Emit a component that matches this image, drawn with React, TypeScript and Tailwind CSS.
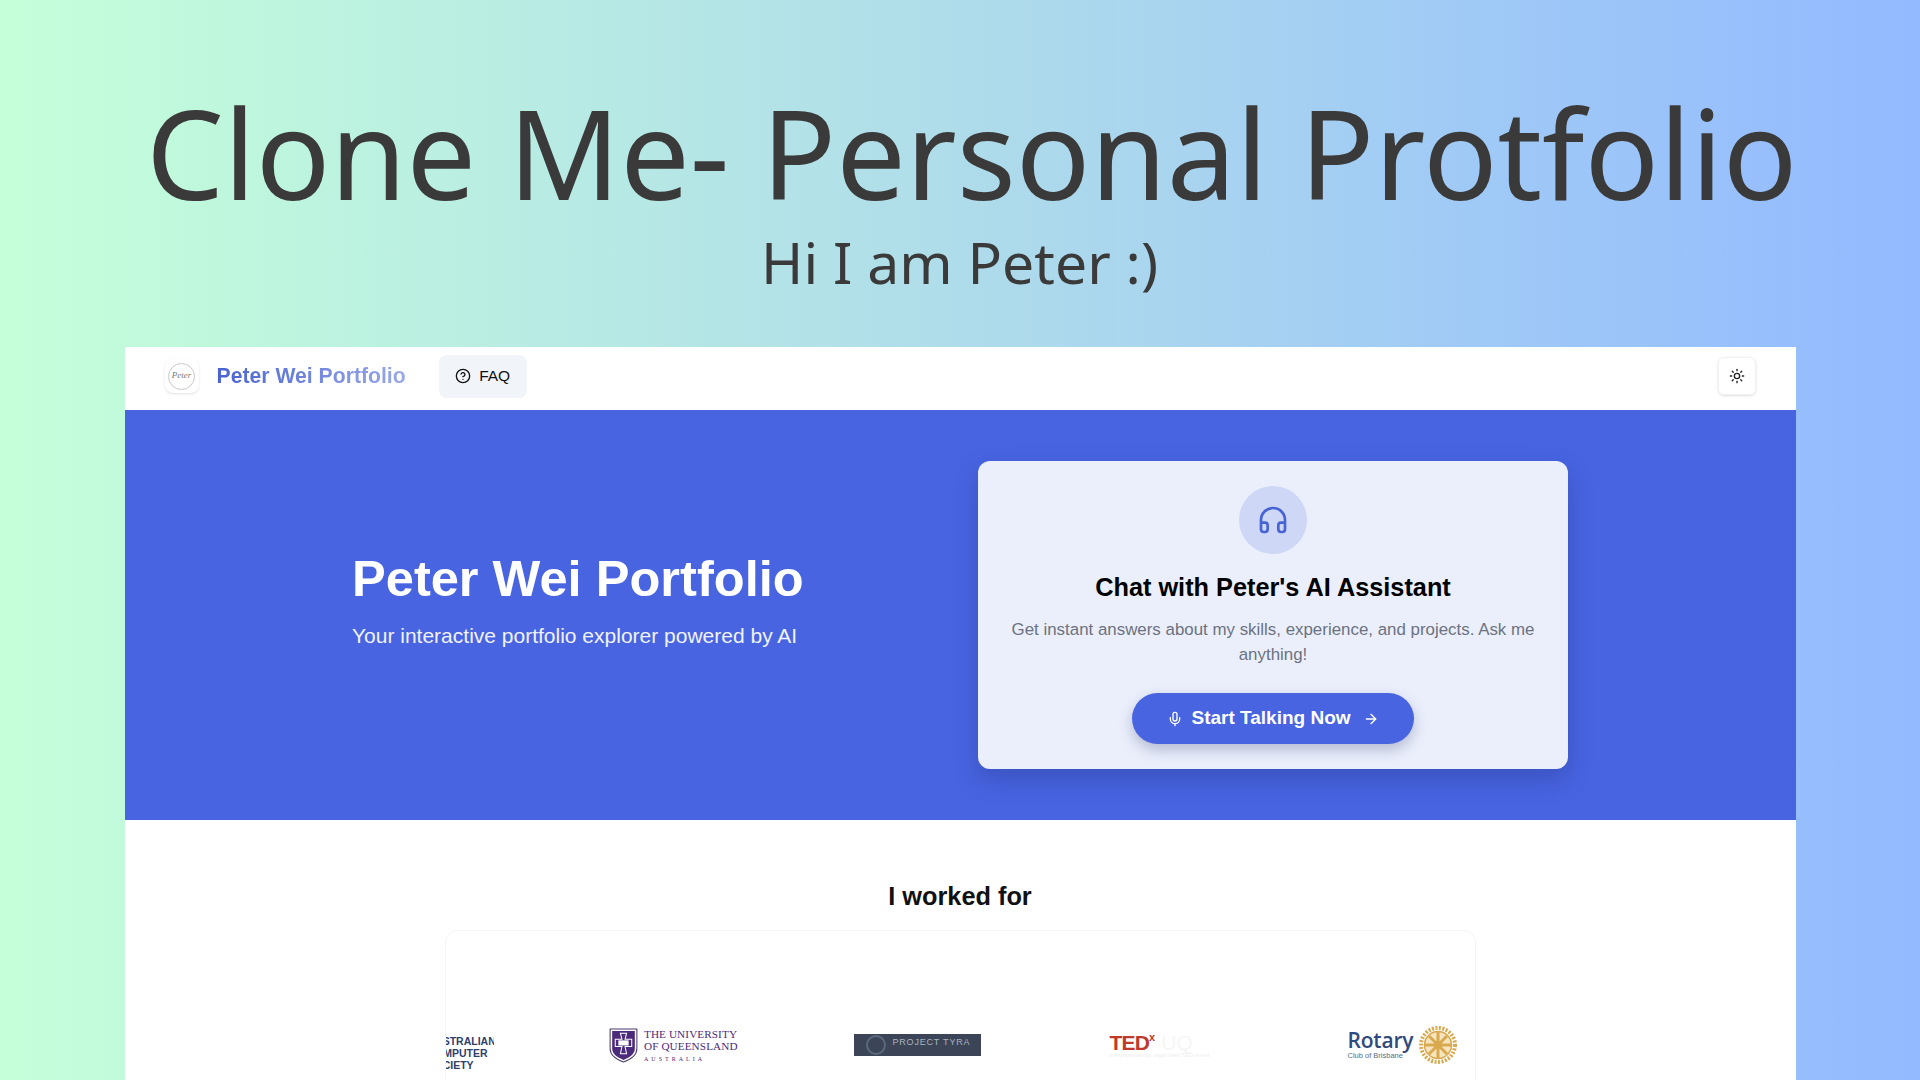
import React from 'react';
import { CircleHelp, Sun, Headphones, Mic, ArrowRight } from 'lucide-react';

const sans = { fontFamily: '"Liberation Sans", Arial, sans-serif' };

const UqLogo = () => (
  <div className="flex items-start gap-[6px] w-[126.5px] shrink-0">
    <svg width="29" height="35" viewBox="0 0 28 34" className="shrink-0">
      <path d="M1 1H27V20C27 27 20 31 14 33C8 31 1 27 1 20Z" fill="#fff" stroke="#4a3a70" strokeWidth="1" />
      <path d="M3 3H25V20C25 26 19 29 14 31C9 29 3 26 3 20Z" fill="#4b2a7b" />
      <path d="M11 5H17L15.5 11H22V18H15.5L17 25H11L12.5 18H6V11H12.5Z" fill="#4b2a7b" stroke="#fff" strokeWidth="1" />
      <rect x="9" y="12" width="10" height="5" fill="#fff" />
    </svg>
    <div className="text-[#4b2a7b] leading-none whitespace-nowrap font-['Liberation_Serif',serif]">
      <div className="text-[11.2px] tracking-[0.1px] mt-[1px]">THE UNIVERSITY</div>
      <div className="text-[11.2px] tracking-[0.1px] mt-[1px]">OF QUEENSLAND</div>
      <div className="text-[6px] tracking-[3px] mt-[4px]">AUSTRALIA</div>
    </div>
  </div>
);

const TyraLogo = () => (
  <div className="flex items-center w-[127px] h-[22px] bg-[#3b4557] shrink-0 pl-3 gap-[7px]">
    <span className="w-5 h-5 rounded-full border-2 border-[#5d6a7d]" />
    <span className="text-[9px] tracking-[0.8px] text-[#aab3bf] -mt-[4px]" style={sans}>PROJECT TYRA</span>
  </div>
);

const TedLogo = () => (
  <div className="w-[112px] shrink-0 leading-none" style={sans}>
    <div className="flex items-start h-[18px]">
      <span className="text-[21px] font-black text-[#c0392b] tracking-[-0.8px]">TED</span>
      <span className="text-[11px] font-bold text-[#c0392b]">x</span>
      <span className="text-[21px] text-[#f6f6f6] ml-[6px]">UQ</span>
    </div>
    <div className="text-[6px] text-[#eeeeee] mt-[2px] whitespace-nowrap">x independently organized TED event</div>
  </div>
);

const RotaryLogo = () => (
  <div className="flex items-center gap-[5px] w-[108px] shrink-0" style={sans}>
    <div className="leading-none text-[#2f4a7d]">
      <div className="text-[21px] font-['Open_Sans',sans-serif] font-semibold tracking-[-0.2px]">Rotary</div>
      <div className="text-[7.5px] mt-[1px] text-[#5b6b85]">Club of Brisbane</div>
    </div>
    <svg width="40" height="40" viewBox="0 0 40 40" className="shrink-0">
      <circle cx="20" cy="20" r="17" fill="none" stroke="#d9a94f" strokeWidth="4" strokeDasharray="2 1.5" />
      <circle cx="20" cy="20" r="13.5" fill="#f5e4bd" stroke="#d9a94f" strokeWidth="1.5" />
      <path d="M20 7V33M7 20H33M11 11L29 29M29 11L11 29" stroke="#d9a94f" strokeWidth="3" />
      <circle cx="20" cy="20" r="4" fill="#d9a94f" />
    </svg>
  </div>
);

export default function App() {
  return (
    <div className="h-screen overflow-hidden flex flex-col items-center bg-gradient-to-r from-[#c4ffd9] via-[#afdcea] to-[#93b9ff]">
      <h1 className="mt-[79px] ml-[24px] text-[125px] leading-[146px] text-[#3a3a3a] whitespace-nowrap font-['Noto_Sans',sans-serif] scale-x-[0.987]">
        Clone Me- Personal Protfolio
      </h1>
      <p className="mt-[4px] text-[56px] leading-[66px] text-[#3a3a3a] whitespace-nowrap font-['Noto_Sans',sans-serif] scale-x-[1.02]">
        Hi I am Peter :)
      </p>

      <div className="mt-[52px] w-[1671px] flex-1 bg-white min-h-0 overflow-hidden" style={sans}>
        <nav className="h-[63px] flex items-center justify-between pl-[40px] pr-[40px] pb-[5px]">
          <div className="flex items-center">
            <div className="w-[34px] h-[34px] rounded-lg bg-white shadow-sm flex items-center justify-center">
              <span className="w-[27px] h-[27px] rounded-full border border-[#c8c8c8] flex items-center justify-center text-[9px] italic text-[#777] font-['Liberation_Serif',serif]">Peter</span>
            </div>
            <span className="ml-[18px] text-[21.2px] font-bold text-transparent bg-clip-text bg-gradient-to-r from-[#4a63d0] to-[#9ba9e8]">Peter Wei Portfolio</span>
            <div className="ml-[33px] h-[43px] w-[88px] rounded-lg bg-[#f1f5f9] flex items-center justify-center gap-[8px] text-[#111] text-[15.5px]">
              <CircleHelp size={16} />
              FAQ
            </div>
          </div>
          <div className="w-[38px] h-[38px] rounded-md border border-[#f1f1f1] shadow-sm flex items-center justify-center text-[#222]">
            <Sun size={16} />
          </div>
        </nav>

        <section className="h-[410px] bg-[#4864e1] flex items-center justify-center">
          <div className="w-[1216px] grid grid-cols-2 gap-[36px] items-center">
            <div className="text-white -mt-[31px]">
              <h2 className="text-[50.6px] leading-[60px] font-bold">Peter Wei Portfolio</h2>
              <p className="mt-[13px] text-[21px] leading-[28px] text-[#f0f3ff]">Your interactive portfolio explorer powered by AI</p>
            </div>
            <div className="h-[308px] rounded-xl bg-[#ebeffc] shadow-[0_10px_25px_rgba(20,30,90,0.25)] flex flex-col items-center pt-[25px] px-[24px]">
              <div className="w-[68px] h-[68px] rounded-full bg-[#ced7f6] flex items-center justify-center text-[#4864d4]">
                <Headphones size={32} strokeWidth={2} />
              </div>
              <h3 className="mt-[17px] text-[25.3px] leading-[32px] font-bold text-black">Chat with Peter's AI Assistant</h3>
              <p className="mt-[14px] text-[16.9px] leading-[25px] text-[#6b7280] text-center">Get instant answers about my skills, experience, and projects. Ask me anything!</p>
              <div className="mt-[26px] w-[282px] h-[51px] rounded-full bg-[#4864e1] shadow-[0_6px_14px_rgba(20,30,90,0.25)] flex items-center justify-center text-white text-[19px] font-bold">
                <Mic size={16} />
                <span className="ml-[8px] mr-[12px]">Start Talking Now</span>
                <ArrowRight size={16} />
              </div>
            </div>
          </div>
        </section>

        <section className="flex flex-col items-center">
          <h2 className="mt-[60px] text-[25.3px] leading-[32px] font-bold text-[#111]">I worked for</h2>
          <div className="mt-[18px] w-[1031px] h-[200px] rounded-xl border border-[#f3f5f7] overflow-hidden flex items-center pt-[30px] gap-[118px]">
            <div className="w-[48px] shrink-0 overflow-hidden mt-[16px] -mr-[2.5px]">
              <div className="-ml-[18px] text-[10.5px] leading-[12px] font-bold text-[#2f3f6b] whitespace-nowrap">
                <div>AUSTRALIAN</div>
                <div>COMPUTER</div>
                <div>SOCIETY</div>
              </div>
            </div>
            <UqLogo />
            <TyraLogo />
            <div className="ml-[11px]"><TedLogo /></div>
            <div className="ml-[8px]"><RotaryLogo /></div>
          </div>
        </section>
      </div>
    </div>
  );
}
